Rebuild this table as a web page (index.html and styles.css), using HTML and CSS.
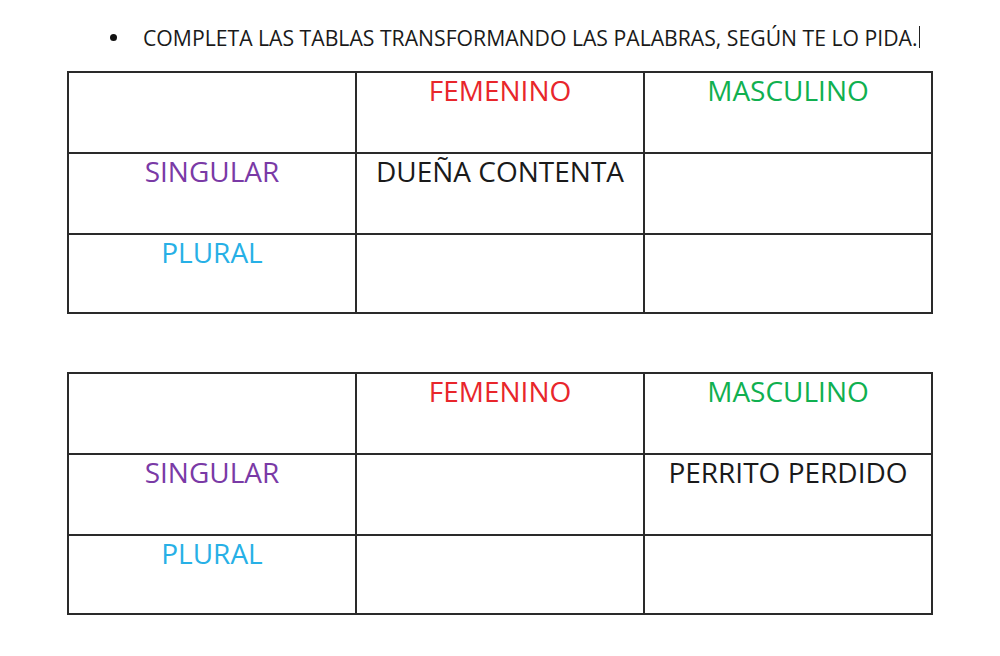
FILE: index.html
```html
<!DOCTYPE html>
<html lang="es">
<head>
<meta charset="utf-8">
<link rel="stylesheet" href="styles.css">
</head>
<body>
<div class="page">
  <div class="instruction">
    <span class="bullet"></span>
    <span class="instruction-text">COMPLETA LAS TABLAS TRANSFORMANDO LAS PALABRAS, SEGÚN TE LO PIDA.</span><span class="caret"></span>
  </div>

  <table class="grid grid-first">
    <colgroup><col class="c"><col class="c"><col class="c"></colgroup>
    <tr class="row-head">
      <td></td>
      <td class="fem">FEMENINO</td>
      <td class="masc">MASCULINO</td>
    </tr>
    <tr class="row-mid">
      <td class="sing">SINGULAR</td>
      <td class="word">DUEÑA CONTENTA</td>
      <td></td>
    </tr>
    <tr class="row-last">
      <td class="plur">PLURAL</td>
      <td></td>
      <td></td>
    </tr>
  </table>

  <table class="grid grid-second">
    <colgroup><col class="c"><col class="c"><col class="c"></colgroup>
    <tr class="row-head">
      <td></td>
      <td class="fem">FEMENINO</td>
      <td class="masc">MASCULINO</td>
    </tr>
    <tr class="row-mid">
      <td class="sing">SINGULAR</td>
      <td></td>
      <td class="word">PERRITO PERDIDO</td>
    </tr>
    <tr class="row-last">
      <td class="plur">PLURAL</td>
      <td></td>
      <td></td>
    </tr>
  </table>
</div>
</body>
</html>
```

FILE: styles.css
```css
html, body {
  margin: 0;
  padding: 0;
  background: #ffffff;
}

.page {
  width: 1000px;
  height: 656px;
  box-sizing: border-box;
  padding: 22px 0 0 67px;
  font-family: "Open Sans", "Liberation Sans", sans-serif;
  color: #1a1a1a;
}

.instruction {
  display: flex;
  align-items: center;
  height: 30px;
  margin-bottom: 19px;
}

.bullet {
  width: 7px;
  height: 7px;
  border-radius: 50%;
  background: #111;
  margin-left: 43px;
  margin-right: 26px;
}

.instruction-text {
  font-size: 21.2px;
  color: #1a1a1a;
}

.caret {
  width: 1px;
  height: 22px;
  background: #222;
  margin-left: 1px;
}

.grid {
  border-collapse: collapse;
  table-layout: fixed;
  width: 864px;
}

.grid .c {
  width: 288px;
}

.grid-second {
  margin-top: 58px;
}

.grid td {
  border: 2px solid #2a2a2a;
  vertical-align: top;
  text-align: center;
  padding: 0;
  font-size: 28px;
  line-height: 35px;
  color: #1a1a1a;
}

.row-head td,
.row-mid td {
  height: 79px;
}

.row-last td {
  height: 77px;
}

.fem { color: #e8262b !important; }
.masc { color: #10b050 !important; }
.sing { color: #7a3aa6 !important; }
.plur { color: #27b0e6 !important; }
.word { color: #1a1a1a; }
```
